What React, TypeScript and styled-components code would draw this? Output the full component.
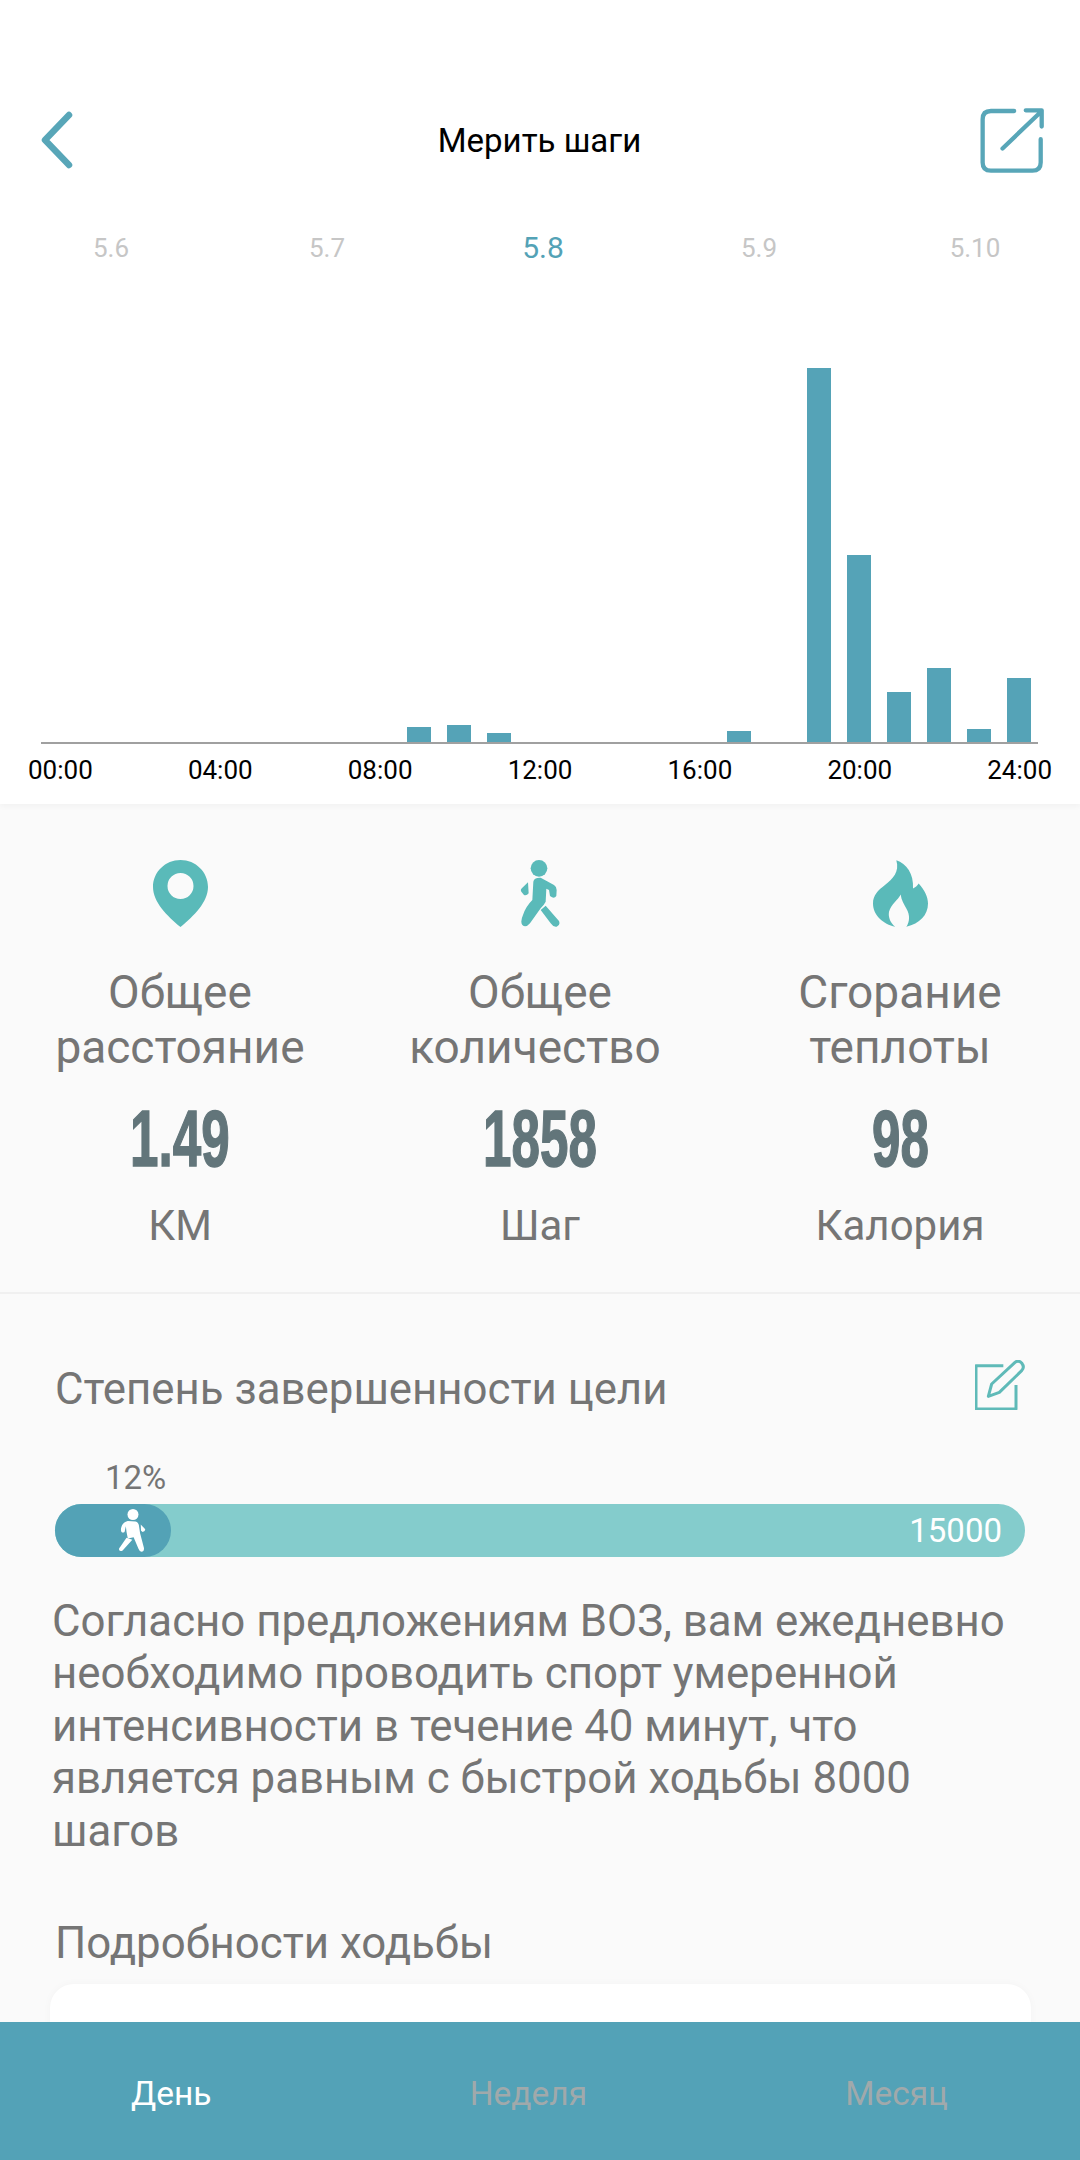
import React from 'react';
import styled, { createGlobalStyle } from 'styled-components';

const GlobalStyle = createGlobalStyle`
  html, body {
    margin: 0;
    padding: 0;
    background: #fafafa;
    font-family: Roboto, "Noto Sans", sans-serif;
  }
`;

const dates = [
  { label: '5.6', active: false },
  { label: '5.7', active: false },
  { label: '5.8', active: true },
  { label: '5.9', active: false },
  { label: '5.10', active: false },
];

// bar height in px by hour, index 0 is 00:00
const barHeights: Record<number, number> = {
  9: 15, 10: 17, 11: 9, 17: 11, 19: 374, 20: 187, 21: 50, 22: 74, 23: 13, 24: 64,
};

const hours = ['00:00', '04:00', '08:00', '12:00', '16:00', '20:00', '24:00'];

const BackIcon = () => (
  <svg width="32" height="58" viewBox="0 0 32 58">
    <path d="M28 4 L4 29 L28 54" fill="none" stroke="#58a6b8" strokeWidth="6.5" strokeLinecap="round" strokeLinejoin="round" />
  </svg>
);

const ExportIcon = () => (
  <svg width="67" height="68" viewBox="55 40 200 205">
    <path d="M160 55 L90 55 Q65 55 65 80 L65 210 Q65 235 90 235 L215 235 Q240 235 240 210 L240 140" fill="none" stroke="#58a6b8" strokeWidth="13" strokeLinecap="round" />
    <path d="M125 168 L240 58 M195 53 L243 53 L243 102" fill="none" stroke="#58a6b8" strokeWidth="13" strokeLinecap="round" strokeLinejoin="round" />
  </svg>
);

const PinIcon = () => (
  <svg width="55" height="67" viewBox="0 0 55 67">
    <path
      fillRule="evenodd"
      fill="#5abab9"
      d="M27.5 0C12.3 0 0 12 0 27C0 42 14 56 27.5 67C41 56 55 42 55 27C55 12 42.7 0 27.5 0ZM27.5 13A13 13 0 1 1 27.5 39A13 13 0 1 1 27.5 13Z"
    />
  </svg>
);

const WalkIcon = () => (
  <svg width="40" height="67" viewBox="88 60 120 201">
    <g fill="#5abab9">
      <circle cx="145" cy="85" r="25" />
      <path d="M128 125 Q130 112 150 113 L190 135 Q198 140 198 150 L197 168 Q192 175 184 172 L178 168 L175 150 L167 146 L165 185 Q160 195 150 205 L118 250 Q105 265 95 255 Q88 245 97 225 Q105 200 125 180 Z" />
      <path d="M112 127 L114 160 Q108 168 100 165 L92 155 Q88 148 95 143 Z" />
      <path d="M165 197 L205 243 Q210 255 198 260 Q188 262 180 250 L150 210 Z" />
    </g>
  </svg>
);

const FireIcon = () => (
  <svg width="55" height="67" viewBox="95 60 165 200">
    <path
      fill="#5abab9"
      d="M165 60C195 70 218 100 215 145C222 142 228 136 232 130C250 150 260 170 260 190C260 225 235 250 195 260C205 245 207 225 195 205C188 192 180 180 178 163C170 180 150 190 143 215C140 232 148 250 162 260C125 252 95 225 95 190C95 165 110 150 130 135C155 115 175 95 165 60Z"
    />
  </svg>
);

const EditIcon = () => (
  <svg width="50" height="50" viewBox="45 33 150 150">
    <path d="M130 50 L48 50 L48 180 L168 180 L168 108" fill="none" stroke="#5fbab8" strokeWidth="9" strokeLinejoin="round" />
    <path d="M85 142 L95 105 L165 40 Q175 32 185 42 Q195 55 185 65 L118 130 Z" fill="none" stroke="#5fbab8" strokeWidth="9" strokeLinejoin="round" />
  </svg>
);

const SmallWalkIcon = () => (
  <svg width="28" height="43" viewBox="232 55 86 133">
    <g fill="#fff">
      <circle cx="278" cy="72" r="17" />
      <path d="M262 92 L286 94 Q296 96 297 110 L300 130 L312 176 Q313 187 304 187 Q298 186 295 178 L280 142 L262 146 L258 125 L256 108 L252 126 Q246 130 242 125 Q239 118 243 108 Q248 95 262 92 Z" />
      <path d="M258 144 L276 150 L246 183 Q239 188 235 182 Q233 176 240 170 Z" />
      <path d="M302 103 L316 118 Q316 125 308 126 L303 122 Z" />
    </g>
  </svg>
);

const App = () => {
  return (
    <Page>
      <GlobalStyle />
      <Scroll>
        <TopPanel>
          <Header>
            <HeaderLeft>
              <BackIcon />
            </HeaderLeft>
            <Title>Мерить шаги</Title>
            <HeaderRight>
              <ExportIcon />
            </HeaderRight>
          </Header>
          <DateRow>
            {dates.map((d) => (
              <DateItem key={d.label} $active={d.active}>{d.label}</DateItem>
            ))}
          </DateRow>
          <Bars>
            {Array.from({ length: 25 }, (_, hour) => (
              <BarSlot key={hour}>
                {barHeights[hour] ? <Bar style={{ height: barHeights[hour] }} /> : null}
              </BarSlot>
            ))}
          </Bars>
          <HourRow>
            {hours.map((h) => (
              <Hour key={h}>{h}</Hour>
            ))}
          </HourRow>
        </TopPanel>

        <Stats>
          <Stat>
            <StatIcon><PinIcon /></StatIcon>
            <StatLabel>Общее<br />расстояние</StatLabel>
            <StatValue><span>1.49</span></StatValue>
            <StatUnit>КМ</StatUnit>
          </Stat>
          <Stat>
            <StatIcon><WalkIcon /></StatIcon>
            <StatLabel>Общее<br /><Nudged>количество</Nudged></StatLabel>
            <StatValue><span>1858</span></StatValue>
            <StatUnit>Шаг</StatUnit>
          </Stat>
          <Stat>
            <StatIcon><FireIcon /></StatIcon>
            <StatLabel>Сгорание<br />теплоты</StatLabel>
            <StatValue><span>98</span></StatValue>
            <StatUnit>Калория</StatUnit>
          </Stat>
        </Stats>

        <Goal>
          <GoalHead>
            <SectionTitle>Степень завершенности цели</SectionTitle>
            <EditIcon />
          </GoalHead>
          <Percent>12%</Percent>
          <Progress>
            <ProgressFill>
              <SmallWalkIcon />
            </ProgressFill>
            <ProgressMax>15000</ProgressMax>
          </Progress>
          <Advice>
            Согласно предложениям ВОЗ, вам ежедневно необходимо проводить спорт умеренной интенсивности в течение 40 минут, что является равным с быстрой ходьбы 8000 шагов
          </Advice>
          <DetailTitle>Подробности ходьбы</DetailTitle>
          <DetailCard />
        </Goal>
      </Scroll>

      <TabBar>
        <Tab $active>День</Tab>
        <Tab>Неделя</Tab>
        <Tab>Месяц</Tab>
      </TabBar>
    </Page>
  );
};

const Page = styled.div`
  width: 1080px;
  height: 2160px;
  display: flex;
  flex-direction: column;
  overflow: hidden;
  background: #fafafa;
`;
const Scroll = styled.div`
  height: 2022px;
  overflow: hidden;
`;
const TopPanel = styled.div`
  background: #fff;
  height: 804px;
  box-sizing: border-box;
  padding-top: 105px;
  box-shadow: 0 2px 6px rgba(0, 0, 0, 0.04);
  position: relative;
`;
const Header = styled.div`
  display: grid;
  grid-template-columns: 1fr auto 1fr;
  align-items: center;
  height: 70px;
  padding: 0 34px;
`;
const HeaderLeft = styled.div`
  display: flex;
  padding-left: 7px;
`;
const Title = styled.div`
  font-size: 33px;
  margin-left: -1px;
  color: #000;
`;
const HeaderRight = styled.div`
  display: flex;
  justify-content: flex-end;
`;
const DateRow = styled.div`
  display: grid;
  grid-template-columns: repeat(5, 216px);
  margin-top: 55px;
  height: 36px;
  padding-left: 3px;
`;
const DateItem = styled.div<{ $active: boolean }>`
  text-align: center;
  line-height: 36px;
  font-size: ${(p) => (p.$active ? '30px' : '26px')};
  color: ${(p) => (p.$active ? '#53a2b6' : '#c6c6c6')};
`;
const Bars = styled.div`
  display: grid;
  grid-template-columns: repeat(25, 40px);
  align-items: end;
  height: 476px;
  margin: 0 42px 0 41px;
  border-bottom: 2px solid #a0a0a0;
`;
const BarSlot = styled.div`
  display: flex;
  justify-content: center;
  align-items: flex-end;
`;
const Bar = styled.div`
  width: 24px;
  margin-right: 4px;
  background: #55a3b7;
`;
const HourRow = styled.div`
  display: flex;
  justify-content: space-between;
  padding: 0 28px;
  margin-top: 11px;
`;
const Hour = styled.div`
  font-size: 26px;
  line-height: 30px;
  color: #000;
`;
const Stats = styled.div`
  display: grid;
  grid-template-columns: repeat(3, 360px);
  padding: 56px 0 41px;
  border-bottom: 2px solid #f0f0f0;
`;
const Stat = styled.div`
  display: flex;
  flex-direction: column;
  align-items: center;
  text-align: center;
`;
const StatIcon = styled.div`
  height: 67px;
  display: flex;
  justify-content: center;
`;
const StatLabel = styled.div`
  margin-top: 38px;
  font-size: 46px;
  line-height: 55px;
  white-space: nowrap;
  color: #757575;
`;
const Nudged = styled.span`
  margin-right: 10px;
`;
const StatValue = styled.div`
  margin-top: 21px;
  height: 80px;
  font-family: "Liberation Sans Narrow", "Liberation Sans", sans-serif;
  font-weight: 700;
  font-size: 80px;
  line-height: 86px;
  color: #62757a;
  span {
    display: inline-block;
    transform: scaleX(0.64);
    -webkit-text-stroke: 1.5px #62757a;
  }
`;
const StatUnit = styled.div`
  margin-top: 25px;
  font-size: 42px;
  line-height: 50px;
  color: #757575;
`;
const Goal = styled.div`
  padding: 0 55px;
`;
const GoalHead = styled.div`
  display: flex;
  justify-content: space-between;
  align-items: flex-start;
  padding-top: 66px;
`;
const SectionTitle = styled.div`
  margin-top: 4px;
  font-size: 43.8px;
  line-height: 50px;
  color: #757575;
`;
const Percent = styled.div`
  margin-top: 44px;
  padding-left: 50px;
  font-size: 33px;
  line-height: 40px;
  color: #757575;
`;
const Progress = styled.div`
  margin-top: 6px;
  height: 53px;
  border-radius: 27px;
  background: #84cccc;
  display: flex;
  justify-content: space-between;
  align-items: center;
  padding-right: 23px;
`;
const ProgressFill = styled.div`
  width: 116px;
  height: 53px;
  box-sizing: border-box;
  border-radius: 27px;
  background: #53a2b6;
  display: flex;
  justify-content: flex-end;
  align-items: center;
  padding-right: 25px;
`;
const ProgressMax = styled.div`
  font-size: 33px;
  color: #fff;
`;
const Advice = styled.div`
  margin: 38px 0 0 -3px;
  font-size: 43.8px;
  line-height: 52.4px;
  color: #757575;
`;
const DetailTitle = styled.div`
  margin-top: 61px;
  font-size: 43.8px;
  line-height: 50px;
  color: #757575;
`;
const DetailCard = styled.div`
  margin: 16px 0 0 -5px;
  width: 981px;
  height: 120px;
  border-radius: 24px;
  background: #fff;
  box-shadow: 0 0 8px rgba(0, 0, 0, 0.03);
`;
const TabBar = styled.div`
  height: 138px;
  box-sizing: border-box;
  padding: 4px 132px 0 131px;
  background: #53a2b7;
  display: flex;
  justify-content: space-between;
  align-items: center;
`;
const Tab = styled.div<{ $active?: boolean }>`
  font-size: 33.5px;
  color: ${(p) => (p.$active ? '#ffffff' : '#a0a9ab')};
`;

export default App;
